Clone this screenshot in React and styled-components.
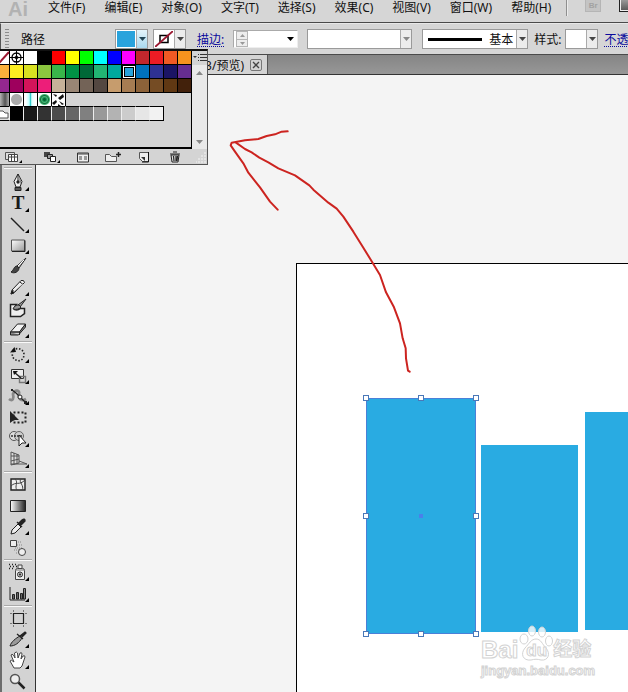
import React from "react";
import styled, { createGlobalStyle, css } from "styled-components";

const GlobalStyle = createGlobalStyle`
  *, *::before, *::after { box-sizing: border-box; }
  body { margin: 0; background: #f4f4f4; overflow: hidden; }
  body, button, input, select {
    font-family: "Noto Sans", "Noto Sans CJK SC", sans-serif;
    font-size: 12px;
    color: #111;
  }
  button { padding: 0; border: 0; background: none; }
  svg { display: block; flex: none; }
`;

const Window = styled.div`
  position: relative;
  display: flex;
  flex-direction: column;
  min-height: 100vh;
  overflow: hidden;
`;

/* ---------- menu bar ---------- */

const MenuBar = styled.header`
  display: flex;
  align-items: flex-start;
  height: 23px;
  background: #d6d6d6;
  border-bottom: 1px solid #4a4a4a;
`;

const AppLogo = styled.span`
  flex: none;
  width: 40px;
  padding-left: 8px;
  font: bold 20px/18px "Liberation Sans", sans-serif;
  color: #b2b2b2;
`;

const Menus = styled.nav`
  display: flex;
  flex: none;
  gap: 19px;
  padding-left: 8px;
`;

const MenuButton = styled.button`
  line-height: 15px;
  white-space: nowrap;
`;

const MenuDivider = styled.i`
  flex: none;
  width: 2px;
  height: 16px;
  margin: 0 17px 0 15px;
  background: #8f8f8f;
  border-right: 1px solid #ececec;
`;

const BridgeButton = styled.button`
  flex: none;
  width: 16px;
  height: 12px;
  font: bold 8px/10px "Liberation Sans", sans-serif;
  color: #a2a2a2;
  background: #c4c4c4;
  border: 1px solid #b5b5b5;
  border-top: 0;
`;

const ArrangeButton = styled.button`
  flex: none;
  width: 20px;
  height: 12px;
  margin-left: 18px;
  background: linear-gradient(#999, #555);
  border: 1px solid #222;
  border-top: 0;
  box-shadow: inset 1px -1px #eee;
`;

/* ---------- control bar ---------- */

const ControlBar = styled.section`
  display: flex;
  align-items: center;
  height: 32px;
  background: #d6d6d6;
  border-left: 1px solid #555;
  border-top: 1px solid #e8e8e8;
  border-bottom: 1px solid #4a4a4a;
  white-space: nowrap;
  overflow: hidden;
`;

const Grip = styled.i`
  flex: none;
  width: 4px;
  height: 22px;
  margin-left: 4px;
  background: radial-gradient(circle, #8c8c8c 1px, transparent 1px) 0 0 / 2px 3px;
`;

const TargetName = styled.span`
  flex: none;
  width: 106px;
  padding-left: 12px;
`;

const SwatchField = styled.div`
  display: flex;
  flex: none;
  height: 20px;
  margin-right: ${(p) => p.$after}px;
  background: #fff;
  border: 1px solid #9a9a9a;
`;

const FieldPreview = styled.button`
  display: flex;
  width: ${(p) => p.$width}px;
  padding: 1px;
`;

const FillColor = styled.span`
  flex: 1;
  align-self: stretch;
  background: #29a3dc;
`;

const FieldArrow = styled.button`
  display: grid;
  place-items: center;
  flex: none;
  width: 11px;
  background: ${(p) => (p.$active ? "linear-gradient(#e4f4fb, #a9d9ef)" : "#ececec")};
  border-left: 1px solid #aaa;
`;

const PanelLink = styled.a`
  flex: none;
  color: #0a0a9c;
  text-decoration: underline dotted;
  text-underline-offset: 2px;
  margin-right: ${(p) => p.$after}px;
`;

const WeightField = styled.div`
  display: flex;
  align-items: center;
  flex: none;
  width: 65px;
  height: 18px;
  margin-right: 9px;
  padding: 0 3px 0 2px;
  background: #fff;
  border: 1px solid #aaa;
  border-right-color: #eee;
  border-bottom-color: #eee;
`;

const Stepper = styled.div`
  display: grid;
  grid-template-rows: 1fr 1fr;
  flex: none;
  width: 12px;
  height: 16px;
  border: 1px solid #b5b5b5;
`;

const StepButton = styled.button`
  display: grid;
  place-items: center;
  background: #ededed;
  & + & { border-top: 1px solid #b5b5b5; }
`;

const WeightInput = styled.input`
  flex: 1;
  width: 10px;
  border: 0;
  background: none;
`;

const ProfileSelect = styled.select`
  appearance: none;
  flex: 1;
  min-width: 0;
  border: 0;
  background: transparent;
`;

const ComboField = styled(SwatchField)`
  width: ${(p) => p.$width}px;
  align-items: stretch;
`;

const BrushButton = styled.button`
  display: flex;
  flex: 1;
  align-items: center;
  gap: 7px;
  padding-left: 5px;
`;

const BrushStroke = styled.i`
  width: 54px;
  height: 3px;
  background: #000;
`;

const StyleLabel = styled.label`
  flex: none;
  margin-right: 4px;
`;

/* ---------- document tabs ---------- */

const TabBar = styled.div`
  display: flex;
  height: 20px;
  background: linear-gradient(#858585, #979797);
  border-bottom: 1px solid #333;
`;

const Tab = styled.div`
  display: flex;
  justify-content: flex-end;
  align-items: center;
  gap: 6px;
  width: 268px;
  padding-right: 5px;
  background: #d4d4d4;
  border-right: 1px solid #555;
`;

const TabClose = styled.button`
  display: grid;
  place-items: center;
  width: 12px;
  height: 12px;
  border: 1px solid #777;
  border-radius: 2px;
`;

/* ---------- swatches panel ---------- */

const SwatchPanel = styled.aside`
  position: absolute;
  left: 0;
  top: 49px;
  width: 208px;
  background: #d4d4d4;
  border: 1px solid #555;
  border-width: 2px 1px 1px 0;
  border-top-color: #111;
`;

const PanelBody = styled.div`
  display: flex;
  height: 98px;
`;

const SwatchList = styled.div`
  width: 192px;
  overflow: hidden;
  border-right: 1px solid #000;
  border-bottom: 2px solid #000;
`;

const SwatchRow = styled.div`
  display: flex;
  margin-left: -4px;
`;

const Swatch = styled.button`
  flex: none;
  width: 14px;
  height: 14px;
  background: ${(p) => p.$paint};
  border-right: 1px solid ${(p) => (p.$light ? "#eee" : "#000")};
  border-bottom: 1px solid #000;
  ${(p) => p.$light && css`
    border-top: 1px solid #000;
    margin-top: -1px;
    height: 15px;
    &:last-child { border-right-color: #000; }
  `}
  ${(p) => p.$selected && css`
    border: 1px solid #000;
    box-shadow: inset 0 0 0 1px #fff, inset 0 0 0 2px #000;
  `}
`;

const PanelSide = styled.div`
  display: flex;
  flex-direction: column;
  flex: 1;
`;

const PanelMenu = styled.button`
  display: grid;
  place-items: center;
  height: 14px;
`;

const Scroller = styled.div`
  display: flex;
  flex-direction: column;
  justify-content: space-between;
  flex: 1;
  padding: 5px 0 4px;
  background: #e9e9e9;
`;

const ScrollButton = styled.button`
  display: grid;
  place-items: center;
  height: 6px;
`;

const PanelFooter = styled.footer`
  display: flex;
  align-items: center;
  justify-content: space-between;
  height: 15px;
  padding: 0 0 0 4px;
`;

const FooterButton = styled.button`
  display: grid;
  place-items: center;
  width: 20px;
  height: 15px;
  &:first-child { margin-right: 7px; }
`;

/* ---------- workspace ---------- */

const Workspace = styled.main`
  display: flex;
  flex: 1;
`;

const Toolbar = styled.aside`
  flex: none;
  width: 36px;
  padding-top: 92px;
  background: #d3d3d3;
  border-left: 2px solid #6c6c6c;
  border-right: 1px solid #333;
`;

const ToolGroup = styled.div`
  display: flex;
  flex-direction: column;
  align-items: center;
  margin: 0 2px 0 1px;
  &::before {
    content: "";
    width: 28px;
    height: 2px;
    margin: ${(p) => (p.$first ? "0 0 3px" : "1px 0")};
    background: #fafafa;
    border-top: 1px solid #aaa;
  }
`;

const Tool = styled.button`
  width: 24px;
  height: 21px;
`;

const Canvas = styled.section`
  position: relative;
  flex: 1;
  overflow: hidden;
  background: #f4f4f4;
`;

const Artboard = styled.div`
  position: absolute;
  left: 260px;
  top: 188px;
  right: 0;
  bottom: 0;
  overflow: hidden;
  background: #fff;
  border: 1px solid #000;
  border-width: 1px 0 0 1px;
`;

const Rectangle = styled.div`
  position: absolute;
  left: ${(p) => p.$x}px;
  top: ${(p) => p.$y}px;
  width: ${(p) => p.$w}px;
  height: ${(p) => p.$h}px;
  background: #29abe2;
  ${(p) => p.$selected && css`box-shadow: inset 0 0 0 1px #4a80d8;`}
`;

const Handle = styled.i`
  position: absolute;
  left: ${(p) => p.$x}%;
  top: ${(p) => p.$y}%;
  width: 6px;
  height: 6px;
  margin: -3px;
  background: #fff;
  border: 1px solid #4a78b8;
`;

const CenterPoint = styled(Handle)`
  width: 4px;
  height: 4px;
  margin: -2px;
  background: #4a80ea;
  border: 0;
`;

const Annotation = styled.svg`
  position: absolute;
  left: 184px;
  top: 45px;
`;

const Watermark = styled.div`
  position: absolute;
  right: 33px;
  bottom: 12px;
  width: 114px;
  color: #fff;
  -webkit-text-stroke: 1px #d3d3d3;
`;

const Brand = styled.div`
  display: flex;
  align-items: flex-end;
  height: 37px;
  font: bold 24px/24px "Liberation Sans", "Noto Sans CJK SC", sans-serif;
`;

const Paw = styled.span`
  position: relative;
  width: 35px;
  height: 37px;
`;

const PawWord = styled.span`
  position: absolute;
  left: 8px;
  top: 17px;
  font-size: 17px;
  line-height: 18px;
`;

const BrandWord = styled.span`
  font-size: 19px;
  line-height: 24px;
`;

const Address = styled.div`
  font: bold 13px/18px "Liberation Sans", sans-serif;
  white-space: nowrap;
`;

/* ---------- drawings ---------- */

const Caret = ({ color = "#444", up = false }) => (
  <svg width="7" height="4" viewBox="0 0 7 4">
    <path d={up ? "M0 4 3.500 0 7 4Z" : "M0 0H7L3.500 4Z"} fill={color} />
  </svg>
);

const SmallCaret = ({ up = false }) => (
  <svg width="5" height="3" viewBox="0 0 5 3">
    <path d={up ? "M0 3 2.500 0 5 3Z" : "M0 0H5L2.500 3Z"} fill="#999" />
  </svg>
);

const Icon = ({ children, flyout = true }) => (
  <svg width="24" height="21" viewBox="0 0 24 21" fill="none" stroke="#222" strokeWidth="1">
    {children}
    {flyout && <path d="M23 15v4h-4z" fill="#000" stroke="none" />}
  </svg>
);

const tools = [
  [
    ["钢笔", <Icon><path d="m12 2-4 7.500 2 5.500h4l2-5.500z" fill="#eee" /><path d="M12 2v8M9 15.500h6v3H9z" fill="#555" /><circle cx="12" cy="10" r="1.200" fill="#222" /><path d="m13 5 2 4-1 4z" fill="#777" stroke="none" /></Icon>],
    ["文字", <Icon><text x="12" y="16" textAnchor="middle" fontFamily="Liberation Serif, serif" fontSize="19" fontWeight="bold" fill="#1a1a1a" stroke="none">T</text></Icon>],
    ["直线段", <Icon><path d="m5 4 13 13" strokeWidth="1.400" /></Icon>],
    ["矩形", <Icon><path d="M5.500 5h13v11h-13z" fill="url(#plate)" stroke="#555" /><path d="M6 16.500h13v-11" stroke="#222" /></Icon>],
    ["画笔", <Icon flyout={false}><path d="m20 2-9 8 2 2z" fill="#bbb" /><path d="M11 10c-3 0-3 4-6 6 3 2 8 0 8-4z" fill="#444" /><path d="m12 10 6-6" stroke="#fff" /></Icon>],
    ["铅笔", <Icon><path d="m5 17 1-4L15 3.500q3-1 3.500 2L9 15z" fill="#eee" /><path d="m14 5 3 2.500M6 13l3 2" /><path d="m5 17 1-3 2 2z" fill="#111" /><path d="m8 15 9-8" stroke="#888" /></Icon>],
    ["斑点画笔", <Icon flyout={false}><path d="M4.500 6.500h6l-2 3c-1 3 3 3 6 1h4v5l-4 3h-10z" fill="#eee" strokeWidth="1.500" /><path d="m20 1-8 6 2 2z" fill="#999" /><path d="M13 7c-4 0-5 2-6 4 3 1 7 0 8-2z" fill="#999" /></Icon>],
    ["橡皮擦", <Icon><path d="m4.500 13 7-8h8l-6 8z" fill="#f3f3f3" /><path d="M4.500 13v3h8l7-8V5l-6 8v3m0-3h-9" fill="#888" /></Icon>],
  ],
  [
    ["旋转", <Icon><path d="M7 6.500c4-4 11-1 11 4s-4 7-7 6-6-4-4-8" strokeWidth="1.600" strokeDasharray="1.500 1.700" /><path d="M4 8.500 8.500 3l1.500 5z" fill="#111" stroke="none" /></Icon>],
    ["比例缩放", <Icon><path d="M5.500 4.500h12v9h-12z" fill="#eee" stroke="#333" /><path d="M13.500 11.500h6v6h-6z" stroke="#777" strokeWidth="1.400" /><path d="m8 7 7 6" strokeWidth="1.400" /><path d="M7 6h5l-4 4z" fill="#111" stroke="none" /></Icon>],
    ["变形", <Icon><path d="M3 13c4 3 5-1 4-5 2-5 7-4 6 0s2 8 7 5" stroke="#888" strokeWidth="2.800" /><path d="m6 4 4 3 4 4 6 6" strokeWidth="1.200" /><circle cx="14" cy="11" r="2" fill="#fff" /><path d="M5 3h2v2H5zM18 15h3v3h-3z" fill="#222" stroke="none" /></Icon>],
    ["自由变换", <Icon flyout={false}><path d="M7.500 5.500h12v10h-12z" strokeWidth="2" strokeDasharray="2 2" /><path d="m4 4 9 9H8l-4 3z" fill="#222" stroke="none" /></Icon>],
    ["形状生成器", <Icon><circle cx="8" cy="8" r="4.500" fill="#ddd" stroke="#555" /><circle cx="13" cy="8" r="4.500" fill="#ccc" stroke="#666" /><path d="M5 8h12" stroke="#333" strokeDasharray="2 1" strokeWidth="1.500" /><path d="M13 7v11l3-3h4z" fill="#fff" /></Icon>],
    ["透视网格", <Icon><path d="m5 3 8 3v8l-8 2zM5 7h8M5 12l8-2M8 4v12m3-11v10m2-3 8 3H5" fill="#ddd" stroke="#555" /></Icon>],
  ],
  [
    ["网格", <Icon flyout={false}><path d="M5 5h14v11H5z" fill="#eee" strokeWidth="1.400" /><path d="M5 12c5-5 8 0 14-6M9 5c4 4-1 7 2 11m4-11c-3 3 4 7 1 11" stroke="#444" /></Icon>],
    ["渐变", <Icon flyout={false}><path d="M4.500 5.500h15v11h-15z" fill="url(#ramp)" /></Icon>],
    ["吸管", <Icon><path d="m5 18 1-4 6-6 3 3-6 6z" fill="#eee" /><path d="m11 6 5 5m-3-4 3-3q3-2 3 1l-4 4z" fill="#222" strokeWidth="1.400" /></Icon>],
    ["混合", <Icon flyout={false}><path d="M4.500 3.500h6v6h-6z" fill="#eee" stroke="#444" /><path d="M12 5h3m-4 3h5m-7 3h8m-9 2h6m-4 3h4" stroke="#888" strokeDasharray="1 1" /><circle cx="16" cy="15" r="3.500" fill="#eee" stroke="#444" /></Icon>],
  ],
  [
    ["符号喷枪", <Icon><path d="M9.500 8.500q0-2 2-2h5q2 0 2 2v9h-9zM12 6V3h4v3" fill="#eee" stroke="#444" /><path d="M10 8h8" stroke="#777" /><circle cx="14" cy="12.500" r="2.500" /><circle cx="14" cy="12.500" r=".8" fill="#111" /><path d="M3 2.500h8m-7 2h7m-8 2h5" strokeDasharray="1 2" strokeWidth="1.400" /></Icon>],
    ["柱形图", <Icon><path d="M4 4v13h15" /><path d="M6.500 11.500h2V16h-2zm4-2h2V16h-2zm4 1h2V16h-2z" fill="#666" /><path d="M17.500 5.500h2V16h-2z" fill="#888" /></Icon>],
  ],
  [
    ["画板", <Icon flyout={false}><path d="M7.500 5.500h10v10h-10z" strokeWidth="1.200" /><path d="M7.500 2v2m10-2v2m-10 13v2m10-2v2M4 5.500h2m-2 10h2m13-10h2m-2 10h2" stroke="#777" /></Icon>],
    ["切片", <Icon><path d="M4 17c1-4 6-8 10-10l2 2c-3 5-7 8-12 8z" fill="#999" /><path d="M11 5l6 5m-3-3 5-4 1 1-4 4" fill="#222" strokeWidth="1.300" /></Icon>],
    ["抓手", <Icon><path d="M8 18 4 11q1-2 4 1L5 5q2-2 4 3l-.500-5q2-2 3 0l.500 5 2-5q2-1 2 1l-1 5 2-3q2-1 2 1l-3 9-2 2z" fill="#fff" stroke="#444" /></Icon>],
    ["缩放", <Icon flyout={false}><circle cx="9" cy="8" r="4.500" fill="#eee" stroke="#555" strokeWidth="1.500" /><path d="m12.500 11.500 6 6" strokeWidth="2.500" /></Icon>],
  ],
];

const NoneMark = () => (
  <svg width="13" height="13" viewBox="0 0 13 13"><path d="M0 0h13v13H0z" fill="#fff" /><path d="M3 12 13 1" stroke="#9b1730" strokeWidth="2" /></svg>
);

const RegistrationMark = () => (
  <svg width="13" height="13" viewBox="0 0 13 13" fill="none" stroke="#000"><path d="M0 0h13v13H0z" fill="#fff" stroke="none" /><circle cx="6.500" cy="6.500" r="4.500" strokeWidth="1.300" /><circle cx="6.500" cy="6.500" r="1.500" /><path d="M0 6.500h13M6.500 0v13" /></svg>
);

const LeafPattern = () => (
  <svg width="13" height="13" viewBox="0 0 13 13" fill="#111"><path d="M0 0h13v13H0z" fill="#fff" /><path d="M1 1l4 1-1 2zM6 5l5-4 1 3-4 3zM0 10l4-3 1 2-3 3zM7 8l5 3-2 1zM6 11l3 2H6z" /></svg>
);

const FolderMark = () => (
  <svg width="13" height="13" viewBox="0 0 13 13"><path d="M3 4h4l2 2h3v5H3z" fill="#fff" stroke="#555" /></svg>
);

const swatchRows = [
  ["none", "registration", "#fff", "#000", "#f00", "#ff0", "#0f0", "#0ff", "#00f", "#f0f", "#c1272d", "#ed1c24", "#f15a24", "#f7931e"],
  ["#fbb03b", "#fcee21", "#d9e021", "#8cc63f", "#39b54a", "#009245", "#006837", "#22b573", "#00a99d", "#29a3dc", "#0071bc", "#2e3192", "#1b1464", "#662d91"],
  ["#93278f", "#9e005d", "#d4145a", "#ed1e79", "#c7b299", "#998675", "#736357", "#534741", "#c69c6d", "#a67c52", "#8c6239", "#754c24", "#603813", "#42210b"],
  [
    "linear-gradient(90deg, #fff, #555 70%, #aaa)",
    "radial-gradient(circle, #aaa 5px, #fff 6px)",
    "linear-gradient(90deg, #fff 15%, #bff 40%, #3cc 50%, #dff 60%, #fff 85%)",
    "radial-gradient(circle, #063 1px, #4b7 3px, #196b3c 4px, #4b7 5px, #fff 6px)",
    "leaf",
  ],
];
const grays = ["folder", "#000", "#1a1a1a", "#333", "#4d4d4d", "#666", "#808080", "#999", "#b3b3b3", "#ccc", "#e6e6e6", "#f2f2f2"];
const marks = { none: <NoneMark />, registration: <RegistrationMark />, leaf: <LeafPattern />, folder: <FolderMark /> };

const footerIcons = [
  ["色板库", <svg width="20" height="14" viewBox="0 0 20 14"><path d="M1.500 2.500h9v7h-9z" fill="#ddd" stroke="#555" /><path d="M4.500 4.500h9v7h-9zM4.500 7h9M7.500 5v6m3-6v6" fill="#fff" stroke="#444" /><path d="M18 10v3h-3z" /></svg>],
  ["色板类型", <svg width="20" height="14" viewBox="0 0 20 14"><path d="M2 2h6v5H2z" fill="#444" /><path d="M5.500 4.500h5v4h-5z" fill="#999" stroke="#222" /><path d="M8.500 6.500h5v5h-5z" fill="#fff" stroke="#222" /><path d="M18 10v3h-3z" /></svg>],
  ["色板选项", <svg width="20" height="14" viewBox="0 0 20 14"><path d="M4.500 3h11v9h-11z" fill="#eee" stroke="#333" /><path d="M5 4h10M6 7h3m2 0h3M6 9h3m2 0h3" stroke="#444" /></svg>],
  ["新建颜色组", <svg width="20" height="14" viewBox="0 0 20 14"><path d="M2.500 4.500h4l2 2h5v5h-11z" fill="#eee" stroke="#555" /><path d="M13 4.500h5M15.500 2v5" stroke="#222" strokeWidth="1.500" /></svg>],
  ["新建色板", <svg width="20" height="14" viewBox="0 0 20 14"><path d="M5.500 2.500h9v9h-6l-3-3z" fill="#eee" stroke="#555" /><path d="M14.500 2v10H8" stroke="#111" fill="none" /><path d="M7 7h4v4z" fill="#333" /></svg>],
  ["删除色板", <svg width="20" height="14" viewBox="0 0 20 14"><path d="M6 5h8l-1 7H7z" fill="#ddd" stroke="#222" /><path d="M5 4h10M8 2h4M8.500 6l.5 5m2-5v5m1.500-5-.5 5" stroke="#222" fill="none" strokeWidth="1.200" /></svg>],
];

const menus = ["文件(F)", "编辑(E)", "对象(O)", "文字(T)", "选择(S)", "效果(C)", "视图(V)", "窗口(W)", "帮助(H)"];
const handles = [[0, 0], [50, 0], [100, 0], [0, 50], [100, 50], [0, 100], [50, 100], [100, 100]];

function Swatches() {
  return (
    <SwatchPanel aria-label="色板">
      <PanelBody>
        <SwatchList>
          {swatchRows.map((row, r) => (
            <SwatchRow key={r}>
              {row.map((paint, i) => (
                <Swatch key={i} aria-label={`色板 ${r + 1}-${i + 1}`} $paint={marks[paint] ? "#fff" : paint} $selected={r === 1 && i === 9}>
                  {marks[paint]}
                </Swatch>
              ))}
            </SwatchRow>
          ))}
          <SwatchRow>
            {grays.map((paint) => (
              <Swatch key={paint} aria-label={`灰度 ${paint}`} $light $paint={marks[paint] ? "#ddd" : paint}>
                {marks[paint]}
              </Swatch>
            ))}
          </SwatchRow>
        </SwatchList>
        <PanelSide>
          <PanelMenu aria-label="面板菜单">
            <svg width="14" height="10" viewBox="0 0 14 10"><path d="M0 3h4L2 5z" fill="#333" /><path d="M5 1.500h1m1 0h7M5 4.500h1m1 0h7M5 7.500h1m1 0h7" stroke="#333" /></svg>
          </PanelMenu>
          <Scroller>
            <ScrollButton aria-label="向上滚动"><Caret color="#888" up /></ScrollButton>
            <ScrollButton aria-label="向下滚动"><Caret color="#888" /></ScrollButton>
          </Scroller>
        </PanelSide>
      </PanelBody>
      <PanelFooter>
        {footerIcons.map(([name, icon]) => <FooterButton key={name} aria-label={name}>{icon}</FooterButton>)}
        <svg width="11" height="12" viewBox="0 0 11 12"><path d="M8 2h2M5 5h2m1 0h2M2 8h2m1 0h2m1 0h2M0 11h1m1 0h2m1 0h2m1 0h2" stroke="#f4f4f4" strokeWidth="1" /></svg>
      </PanelFooter>
    </SwatchPanel>
  );
}

export default function App() {
  return (
    <Window>
      <GlobalStyle />
      <MenuBar>
        <AppLogo>Ai</AppLogo>
        <Menus>{menus.map((m) => <MenuButton key={m}>{m}</MenuButton>)}</Menus>
        <MenuDivider />
        <BridgeButton>Br</BridgeButton>
        <ArrangeButton aria-label="排列文档" />
      </MenuBar>

      <ControlBar>
        <Grip />
        <TargetName>路径</TargetName>
        <SwatchField $after={5}>
          <FieldPreview $width={20} aria-label="填色"><FillColor /></FieldPreview>
          <FieldArrow $active aria-label="填色选项"><Caret color="#245" /></FieldArrow>
        </SwatchField>
        <SwatchField $after={11}>
          <FieldPreview $width={20} aria-label="描边颜色">
            <svg width="18" height="16" viewBox="0 0 18 16"><path d="M5 4.500h8v7H5z" fill="none" stroke="#000" strokeWidth="1.500" /><path d="M0 16 18 0" stroke="#9b1730" strokeWidth="1.800" /></svg>
          </FieldPreview>
          <FieldArrow aria-label="描边选项"><Caret /></FieldArrow>
        </SwatchField>
        <PanelLink href="#stroke" $after={9}>描边:</PanelLink>
        <WeightField>
          <Stepper>
            <StepButton aria-label="增加"><SmallCaret up /></StepButton>
            <StepButton aria-label="减少"><SmallCaret /></StepButton>
          </Stepper>
          <WeightInput aria-label="描边粗细" />
          <Caret color="#000" />
        </WeightField>
        <ComboField $width={105} $after={10}>
          <ProfileSelect aria-label="变量宽度配置文件"><option /></ProfileSelect>
          <FieldArrow as="span"><Caret color="#888" /></FieldArrow>
        </ComboField>
        <ComboField $width={106} $after={6}>
          <BrushButton aria-label="画笔定义"><BrushStroke />基本</BrushButton>
          <FieldArrow aria-label="画笔选项"><Caret /></FieldArrow>
        </ComboField>
        <StyleLabel htmlFor="graphic-style">样式:</StyleLabel>
        <ComboField $width={33} $after={6}>
          <FieldPreview $width={20} id="graphic-style" />
          <FieldArrow aria-label="样式选项"><Caret /></FieldArrow>
        </ComboField>
        <PanelLink href="#opacity" $after={0}>不透</PanelLink>
      </ControlBar>

      <TabBar>
        <Tab>
          3/预览)
          <TabClose aria-label="关闭">
            <svg width="8" height="8" viewBox="0 0 8 8"><path d="m1 1 6 6m0-6L1 7" stroke="#444" strokeWidth="1.300" /></svg>
          </TabClose>
        </Tab>
      </TabBar>

      <Workspace>
        <Toolbar aria-label="工具">
          <svg width="0" height="0">
            <defs>
              <linearGradient id="plate" x2="1" y2="1"><stop stopColor="#fff" /><stop offset="1" stopColor="#999" /></linearGradient>
              <linearGradient id="ramp"><stop stopColor="#fff" /><stop offset="1" stopColor="#222" /></linearGradient>
            </defs>
          </svg>
          {tools.map((group, g) => (
            <ToolGroup key={g} $first={g === 0}>
              {group.map(([name, icon]) => <Tool key={name} aria-label={name}>{icon}</Tool>)}
            </ToolGroup>
          ))}
        </Toolbar>
        <Canvas>
          <Artboard>
            <Rectangle $x={69} $y={134} $w={110} $h={236} $selected>
              {handles.map(([x, y]) => <Handle key={`${x}-${y}`} $x={x} $y={y} />)}
              <CenterPoint $x={50} $y={50} />
            </Rectangle>
            <Rectangle $x={184} $y={181} $w={97} $h={187} />
            <Rectangle $x={288} $y={148} $w={110} $h={218} />
          </Artboard>
          <Annotation width="200" height="260" viewBox="0 0 600 780" fill="none" stroke="#cc2420" strokeWidth="6" strokeLinecap="round" strokeLinejoin="round">
            <path d="M203 34 185 35 165 43 140 48 115 57 75 61 35 68 32 76 45 95 70 130 85 158 120 202 150 245 173 269" />
            <path d="M48 68 75 87 95 97 118 113 145 127 175 145 225 166 268 196 280 209 325 248 350 266 370 290 400 335 430 383 460 432 480 465 498 517 522 562 540 610 548 655 557 685 558 715 564 752 569 755" />
          </Annotation>
          <Watermark>
            <Brand>
              Bai
              <Paw>
                <svg width="35" height="37" viewBox="0 0 35 37" fill="#fff" fillOpacity=".8" stroke="#d3d3d3">
                  <ellipse cx="14" cy="6" rx="3.500" ry="5" /><ellipse cx="24" cy="7" rx="3.500" ry="5" />
                  <ellipse cx="6" cy="14" rx="4" ry="5" /><ellipse cx="31" cy="16" rx="3.500" ry="5" />
                  <path d="M18 14c5 0 6 5 10 9 5 6 2 13-5 12-4-1-6-1-10 0-8 1-11-6-6-12 4-4 6-9 11-9z" />
                </svg>
                <PawWord>du</PawWord>
              </Paw>
              <BrandWord>经验</BrandWord>
            </Brand>
            <Address>jingyan.baidu.com</Address>
          </Watermark>
        </Canvas>
      </Workspace>
      <Swatches />
    </Window>
  );
}
